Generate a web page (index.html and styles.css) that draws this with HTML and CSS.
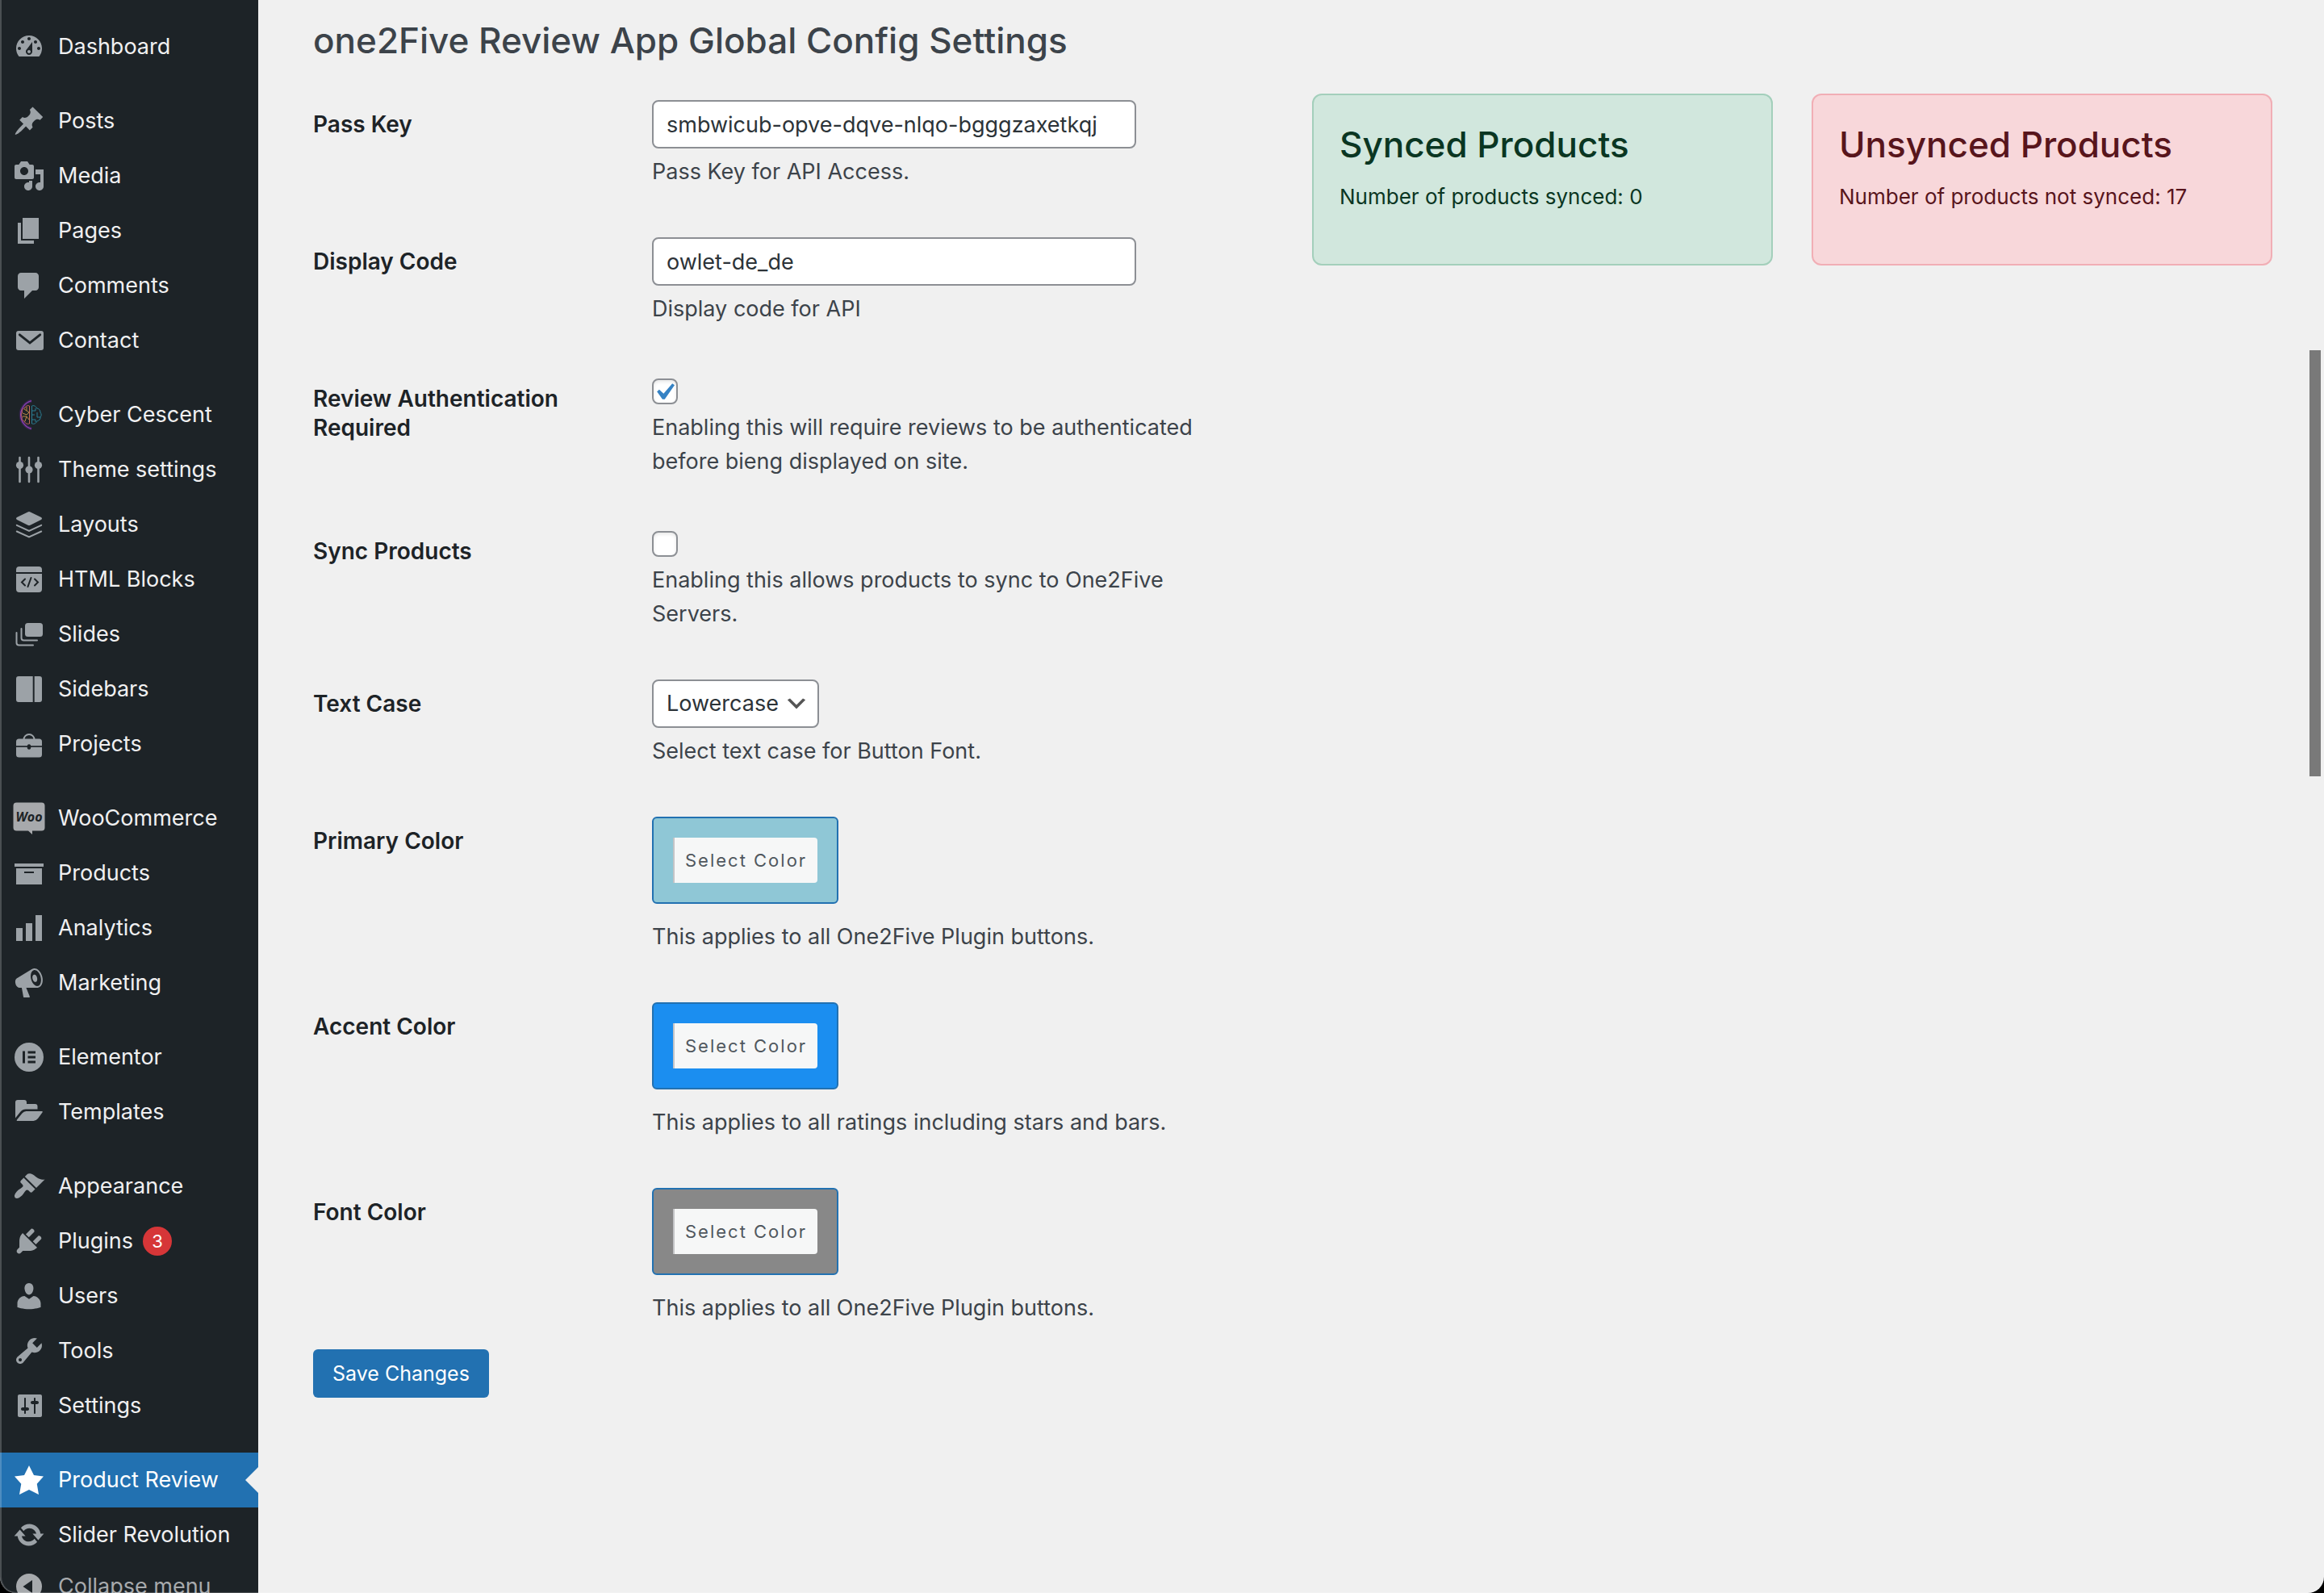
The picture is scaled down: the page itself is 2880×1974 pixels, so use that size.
FILE: index.html
```html
<!DOCTYPE html>
<html lang="en">
<head>
<meta charset="utf-8">
<title>Product Review</title>
<link rel="stylesheet" href="styles.css">
</head>
<body>
<div class="app">
  <nav class="sidebar" aria-label="Main menu">
    <ul class="menu">
      <li><a class="item" href="#"><svg class="icon" viewBox="0 0 20 20"><path d="M3.76 16h12.48c1.1-1.37 1.76-3.11 1.76-5 0-4.42-3.58-8-8-8s-8 3.58-8 8c0 1.89.66 3.63 1.76 5zM10 4c.55 0 1 .45 1 1s-.45 1-1 1-1-.45-1-1 .45-1 1-1zM6 6c.55 0 1 .45 1 1s-.45 1-1 1-1-.45-1-1 .45-1 1-1zm8 0c.55 0 1 .45 1 1s-.45 1-1 1-1-.45-1-1 .45-1 1-1zm-5.37 5.55L12 7v6c0 1.1-.9 2-2 2s-2-.9-2-2c0-.57.24-1.08.63-1.45zM4 10c.55 0 1 .45 1 1s-.45 1-1 1-1-.45-1-1 .45-1 1-1zm12 0c.55 0 1 .45 1 1s-.45 1-1 1-1-.45-1-1 .45-1 1-1zm-5 3c0-.55-.45-1-1-1s-1 .45-1 1 .45 1 1 1 1-.45 1-1z"/></svg>Dashboard</a></li>
    </ul>
    <ul class="menu">
      <li><a class="item" href="#"><svg class="icon" viewBox="0 0 20 20"><path d="M10.44 3.02l1.82-1.82 6.36 6.35-1.83 1.82c-1.05-.68-2.48-.57-3.41.36l-.75.75c-.92.93-1.04 2.35-.35 3.41l-1.83 1.82-2.41-2.41-2.8 2.79c-.42.42-3.38 2.71-3.8 2.29s1.86-3.39 2.28-3.81l2.79-2.79L4.1 9.36l1.83-1.82c1.05.69 2.48.57 3.4-.36l.75-.75c.93-.92 1.05-2.35.36-3.41z"/></svg>Posts</a></li>
      <li><a class="item" href="#"><svg class="icon" viewBox="0 0 20 20"><path d="M13 11V4c0-.55-.45-1-1-1h-1.67L9 1H5L3.67 3H2c-.55 0-1 .45-1 1v7c0 .55.45 1 1 1h10c.55 0 1-.45 1-1zM7 4.5c1.38 0 2.5 1.12 2.5 2.5S8.38 9.5 7 9.5 4.5 8.38 4.5 7 5.62 4.5 7 4.5zM14 6h5v10.5c0 1.38-1.12 2.5-2.5 2.5S14 17.88 14 16.5s1.12-2.5 2.5-2.5c.17 0 .34.02.5.05V9h-3V6zm-4 8.05V13h2v3.5c0 1.38-1.12 2.5-2.5 2.5S7 17.88 7 16.5 8.12 14 9.5 14c.17 0 .34.02.5.05z"/></svg>Media</a></li>
      <li><a class="item" href="#"><svg class="icon" viewBox="0 0 20 20"><path d="M6 15V2h10v13H6zm-1 1h8v2H3V5h2v11z"/></svg>Pages</a></li>
      <li><a class="item" href="#"><svg class="icon" viewBox="0 0 20 20"><path d="M5 2h9c1.1 0 2 .9 2 2v7c0 1.1-.9 2-2 2h-2l-5 5v-5H5c-1.1 0-2-.9-2-2V4c0-1.1.9-2 2-2z"/></svg>Comments</a></li>
      <li><a class="item" href="#"><svg class="icon" viewBox="0 0 20 20"><rect x="2" y="4" width="17" height="12" rx="1.5"/><path class="cut-line" d="M4.2 6.4l6.3 5 6.3-5" stroke-width="1.5" stroke-linecap="round"/></svg>Contact</a></li>
    </ul>
    <ul class="menu">
      <li><a class="item" href="#"><svg class="icon" viewBox="0 0 40 40" fill="none">
        <path d="M23 2.600A18 18 0 0 0 23 37.400" stroke="#6a2fa0" stroke-width="4" opacity=".3"/>
        <path d="M23 2.600A18 18 0 0 0 23 37.400" stroke="#8a3fb4" stroke-width="1.300"/>
        <path d="M20.500 9v22c-3 1-6-1-6-3-3-.5-4-3-3-5-1.800-2-1.800-4 0-6-1-3 1-5 3-5 1-3 4-4 6-3z" stroke="#c76a5a"/>
        <path d="M14 13l6 4M12 18l5 2 3-3M12 22h5l3 4M15 28l2-6M17 10v5" stroke="#b98a45"/>
        <path d="M23.500 9v22c3 1 6-1 6-3 3-.5 5-3 4.500-5 1.500-2 1.500-4 0-6 0-3-2-5-4.500-5-1-3-4-4-6-3z" stroke="#2b7f95"/>
        <path d="M24 15h4v-3M24 20h3M24 26h4v3M30 17v6h4" stroke="#2b7f95"/></svg>Cyber Cescent</a></li>
      <li><a class="item" href="#"><svg class="icon" viewBox="0 0 40 40"><path class="line" d="M8.500 5v30M20 5v30M31.500 5v30" stroke-width="2.600" stroke-linecap="round"/><circle cx="8.500" cy="14.500" r="4.600"/><circle cx="20" cy="20" r="4.600"/><circle cx="31.500" cy="14.500" r="4.600"/></svg>Theme settings</a></li>
      <li><a class="item" href="#"><svg class="icon" viewBox="0 0 40 40"><path d="M18.500 4.500q1.500-.8 3 0L35 11q2 1.500 0 3L21.500 20.800q-1.500.7-3 0L5 14q-2-1.500 0-3z"/><path class="line" d="M4.800 20.800L20 28l15.200-7.200M4.800 28.500L20 35.500l15.200-7" stroke-width="2" stroke-linecap="round"/></svg>Layouts</a></li>
      <li><a class="item" href="#"><svg class="icon" viewBox="0 0 40 40"><path d="M4 11V8q0-4 4-4h24q4 0 4 4v3zM4 13h32v19q0 4-4 4H8q-4 0-4-4z"/><path class="cut-line" d="M15 19.500l-4 4 4 4M22.500 18l-4 11M27 19.500l4 4-4 4" stroke-width="2" stroke-linecap="round"/></svg>HTML Blocks</a></li>
      <li><a class="item" href="#"><svg class="icon" viewBox="0 0 40 40"><rect x="15" y="6" width="22" height="17" rx="3.500"/><path class="line" d="M10.500 13v11.500q0 3 3 3H30M4.500 18v12.500q0 3 3 3H25" stroke-width="2" stroke-linecap="round"/></svg>Slides</a></li>
      <li><a class="item" href="#"><svg class="icon" viewBox="0 0 40 40"><path d="M24.700 4v32H7q-3 0-3-3V7q0-3 3-3zM26.700 4H33q3 0 3 3v26q0 3-3 3h-6.300z"/></svg>Sidebars</a></li>
      <li><a class="item" href="#"><svg class="icon" viewBox="0 0 40 40"><path class="line" d="M13.500 14.500a6.500 6.500 0 0 1 13 0" stroke-width="2"/><rect x="4" y="13.500" width="32" height="23" rx="3.500"/><path class="cut-line" d="M4 23h32" stroke-width="1.700"/><ellipse class="cut" cx="20" cy="23.500" rx="2.300" ry="3.300"/></svg>Projects</a></li>
    </ul>
    <ul class="menu">
      <li><a class="item" href="#"><svg class="icon woo" viewBox="0 0 40 40"><path d="M4.500.5h31q4 0 4 4v27q0 4-4 4H24V40l-5-4.500H4.500q-4 0-4-4v-27q0-4 4-4z"/><text class="cut" x="20" y="24" text-anchor="middle">Woo</text></svg>WooCommerce</a></li>
      <li><a class="item" href="#"><svg class="icon" viewBox="0 0 20 20"><path d="M19 4v2H1V4h18zM2 7h16v10H2V7zm11 3V9H7v1h6z"/></svg>Products</a></li>
      <li><a class="item" href="#"><svg class="icon" viewBox="0 0 20 20"><path d="M18 18V2h-4v16h4zm-6 0V7H8v11h4zm-6 0v-8H2v8h4z"/></svg>Analytics</a></li>
      <li><a class="item" href="#"><svg class="icon" viewBox="0 0 20 20"><path d="M18.150 5.940c.46 1.620.38 3.220-.02 4.480-.42 1.280-1.260 2.180-2.300 2.480-.16.06-.26.06-.4.06-.06.02-.12.02-.18.02-.06.02-.14.02-.22.02h-6.800l2.220 5.500c.02.14-.06.26-.14.34-.08.1-.24.16-.34.16H6.950c-.1 0-.26-.06-.34-.16-.08-.08-.16-.2-.14-.34l-1-5.500H4.250l-.02-.02c-.5.06-1.080-.18-1.540-.62s-.88-1.080-1.060-1.880c-.24-.8-.2-1.560-.02-2.200.18-.62.58-1.080 1.060-1.300l.02-.02 9-5.400c.1-.06.18-.1.24-.16.06-.04.14-.08.24-.12.16-.08.28-.12.5-.18 1.040-.3 2.240.1 3.220.98s1.840 2.240 2.260 3.860zm-2.580 5.980h-.02c.4-.1.74-.34 1.040-.7.58-.7.86-1.760.86-3.040 0-.64-.1-1.300-.28-1.980-.34-1.360-1.020-2.500-1.780-3.240s-1.680-1.100-2.460-.88c-.82.22-1.400.96-1.700 2-.32 1.040-.28 2.360.06 3.720.38 1.360 1 2.500 1.800 3.240.78.74 1.620 1.100 2.480.88zm-2.540-7.080c.22-.04.42-.02.62.04.38.16.76.48 1.020 1s.42 1.200.42 1.780c0 .3-.04.56-.12.8-.18.48-.44.84-.86.94-.34.1-.8-.06-1.140-.4s-.64-.86-.78-1.500c-.18-.62-.12-1.240.02-1.720s.48-.84.82-.94z"/></svg>Marketing</a></li>
    </ul>
    <ul class="menu">
      <li><a class="item" href="#"><svg class="icon" viewBox="0 0 40 40"><circle cx="20" cy="20" r="18"/><path class="cut" d="M12 12.500h3v15h-3zM18.500 12.500h9.500v3h-9.500zM18.500 18.500h9.500v3h-9.500zM18.500 24.500h9.500v3h-9.500z"/></svg>Elementor</a></li>
      <li><a class="item" href="#"><svg class="icon" viewBox="0 0 40 40"><path d="M3 27.500V8q0-3 3-3h8q3 0 3 3v2h10.500q3 0 3 3v3.500H16q-4 0-6.500 3zM5.500 31q-1.500 0-.5-1.500L11.500 21.500q2-2.500 5-2.500H36q1.500 0 .5 1.500L31 28q-2.500 3-5.500 3z"/></svg>Templates</a></li>
    </ul>
    <ul class="menu">
      <li><a class="item" href="#"><svg class="icon" viewBox="0 0 20 20"><path d="M14.480 11.060L7.410 3.990l1.500-1.500c.5-.56 2.300-.47 3.510.32 1.210.8 1.430 1.280 2.910 2.100 1.180.64 2.450 1.260 4.450.85zm-.71.71L6.700 4.700 4.930 6.470c-.39.39-.39 1.020 0 1.410l1.060 1.060c.39.39.39 1.030 0 1.420-.6.6-1.430 1.110-2.210 1.690-.35.26-.7.53-1.010.84C1.430 14.230.4 16.080 1.400 17.070c.99 1 2.840-.03 4.180-1.360.31-.31.58-.66.85-1.020.57-.78 1.080-1.610 1.690-2.210.39-.39 1.020-.39 1.410 0l1.060 1.060c.39.39 1.020.39 1.410 0z"/></svg>Appearance</a></li>
      <li><a class="item" href="#"><svg class="icon" viewBox="0 0 20 20"><path d="M13.110 4.360L9.870 7.600 8 5.730l3.240-3.240c.35-.34 1.050-.2 1.560.32.52.51.66 1.210.31 1.550zm-8 1.770l.91-1.120 9.010 9.010-1.190.84c-.71.71-2.630 1.160-3.820 1.160H6.140L4.900 17.260c-.59.59-1.540.59-2.120 0-.59-.58-.59-1.530 0-2.120l1.240-1.240v-3.880c0-1.130.4-3.190 1.090-3.890zm7.260 3.970l3.240-3.240c.34-.35 1.040-.21 1.550.31.52.51.66 1.210.31 1.550l-3.240 3.250z"/></svg>Plugins <span class="count">3</span></a></li>
      <li><a class="item" href="#"><svg class="icon" viewBox="0 0 20 20"><path d="M10 9.250c-2.270 0-2.730-3.440-2.730-3.440C7 4.020 7.820 2 9.970 2c2.160 0 2.980 2.020 2.710 3.810 0 0-.41 3.440-2.680 3.440zm0 2.570L12.720 10c2.390 0 4.520 2.330 4.520 4.530v2.490s-3.650 1.130-7.240 1.130c-3.650 0-7.240-1.130-7.240-1.130v-2.490c0-2.250 1.940-4.480 4.470-4.480z"/></svg>Users</a></li>
      <li><a class="item" href="#"><svg class="icon" viewBox="0 0 20 20"><path d="M16.680 9.770c-1.340 1.340-3.300 1.670-4.950.99l-5.410 6.520c-.99.99-2.590.99-3.580 0s-.99-2.590 0-3.570l6.520-5.420c-.68-1.650-.35-3.610.99-4.950 1.280-1.280 3.120-1.620 4.720-1.060l-2.890 2.890 2.820 2.820 2.860-2.870c.53 1.580.18 3.390-1.080 4.650zM3.810 16.210c.4.39 1.040.39 1.430 0 .4-.4.4-1.040 0-1.430-.39-.4-1.030-.4-1.430 0-.39.39-.39 1.030 0 1.430z"/></svg>Tools</a></li>
      <li><a class="item" href="#"><svg class="icon" viewBox="0 0 20 20"><path d="M18 16V4c0-.55-.45-1-1-1H4c-.55 0-1 .45-1 1v12c0 .55.45 1 1 1h13c.55 0 1-.45 1-1zM8 11h1c.55 0 1 .45 1 1s-.45 1-1 1H8v1.500c0 .28-.22.5-.5.5s-.5-.22-.5-.5V13H6c-.55 0-1-.45-1-1s.45-1 1-1h1V5.500c0-.28.22-.5.5-.5s.5.22.5.5V11zm5-2h-1c-.55 0-1-.45-1-1s.45-1 1-1h1V5.500c0-.28.22-.5.5-.5s.5.22.5.5V7h1c.55 0 1 .45 1 1s-.45 1-1 1h-1v5.500c0 .28-.22.5-.5.5s-.5-.22-.5-.5V9z"/></svg>Settings</a></li>
    </ul>
    <ul class="menu">
      <li><a class="item current" href="#" aria-current="page"><svg class="icon" viewBox="0 0 20 20"><path d="M10 1l3 6 6 .75-4.120 4.620L16 19l-6-3-6 3 1.130-6.630L1 7.750 7 7z"/></svg>Product Review</a></li>
      <li><a class="item" href="#"><svg class="icon" viewBox="0 0 20 20"><path d="M10.200 3.280c3.530 0 6.430 2.610 6.920 6h2.080l-3.500 4-3.500-4h2.320c-.45-1.970-2.210-3.450-4.320-3.450-1.450 0-2.730.71-3.540 1.780L4.950 5.660C6.230 4.200 8.110 3.280 10.200 3.280zm-.4 13.440c-3.520 0-6.430-2.610-6.920-6H.8l3.500-4c1.170 1.330 2.330 2.670 3.500 4H5.480c.45 1.970 2.210 3.450 4.320 3.450 1.450 0 2.730-.71 3.540-1.780l1.710 1.950c-1.280 1.460-3.150 2.380-5.250 2.380z"/></svg>Slider Revolution</a></li>
      <li><button class="item collapse" type="button"><svg class="icon" viewBox="0 0 40 40"><circle cx="20" cy="20" r="16"/><path class="cut" d="M24 12v16l-11.500-8z"/></svg>Collapse menu</button></li>
    </ul>
  </nav>

  <main class="content">
    <h1 class="title">one2Five Review App Global Config Settings</h1>
    <div class="columns">
      <form class="settings">
        <div class="field">
          <label class="name" for="pass-key">Pass Key</label>
          <div class="control">
            <input class="text" id="pass-key" type="text" value="smbwicub-opve-dqve-nlqo-bgggzaxetkqj">
            <p class="hint">Pass Key for API Access.</p>
          </div>
        </div>
        <div class="field">
          <label class="name" for="display-code">Display Code</label>
          <div class="control">
            <input class="text" id="display-code" type="text" value="owlet-de_de">
            <p class="hint">Display code for API</p>
          </div>
        </div>
        <div class="field">
          <label class="name" for="review-auth">Review Authentication Required</label>
          <div class="control">
            <input class="check" id="review-auth" type="checkbox" checked>
            <p class="hint">Enabling this will require reviews to be authenticated before bieng displayed on site.</p>
          </div>
        </div>
        <div class="field">
          <label class="name" for="sync-products">Sync Products</label>
          <div class="control">
            <input class="check" id="sync-products" type="checkbox">
            <p class="hint">Enabling this allows products to sync to One2Five Servers.</p>
          </div>
        </div>
        <div class="field">
          <label class="name" for="text-case">Text Case</label>
          <div class="control">
            <select class="select" id="text-case"><option>Lowercase</option></select>
            <p class="hint">Select text case for Button Font.</p>
          </div>
        </div>
        <div class="field">
          <label class="name" for="primary-color">Primary Color</label>
          <div class="control">
            <button class="color primary" id="primary-color" type="button"><span class="color-text">Select Color</span></button>
            <p class="hint">This applies to all One2Five Plugin buttons.</p>
          </div>
        </div>
        <div class="field">
          <label class="name" for="accent-color">Accent Color</label>
          <div class="control">
            <button class="color accent" id="accent-color" type="button"><span class="color-text">Select Color</span></button>
            <p class="hint">This applies to all ratings including stars and bars.</p>
          </div>
        </div>
        <div class="field">
          <label class="name" for="font-color">Font Color</label>
          <div class="control">
            <button class="color font" id="font-color" type="button"><span class="color-text">Select Color</span></button>
            <p class="hint">This applies to all One2Five Plugin buttons.</p>
          </div>
        </div>
        <button class="save" type="submit">Save Changes</button>
      </form>
      <div class="cards">
        <section class="card synced">
          <h2 class="card-title">Synced Products</h2>
          <p class="card-text">Number of products synced: 0</p>
        </section>
        <section class="card unsynced">
          <h2 class="card-title">Unsynced Products</h2>
          <p class="card-text">Number of products not synced: 17</p>
        </section>
      </div>
    </div>
  </main>
  <div class="scroll-thumb"></div>
</div>
</body>
</html>
```
FILE: styles.css
```css
* {
  box-sizing: border-box;
}

html {
  background: #000;
}

body {
  margin: 0;
  font-family: Inter, "Liberation Sans", sans-serif;
  font-size: 27px;
  line-height: 42px;
  color: #3c434a;
}

h1, h2, p, ul {
  margin: 0;
  padding: 0;
}

.app {
  position: relative;
  display: flex;
  height: 100vh;
  overflow: hidden;
  background: #f0f0f0;
  border-radius: 0 0 20px 20px;
}

/* Hairline highlight along the window edge */
.app::after {
  content: "";
  position: absolute;
  inset: 0;
  border-left: 2px solid rgba(255, 255, 255, .2);
  border-bottom: 1px solid rgba(255, 255, 255, .2);
  border-radius: 0 0 20px 20px;
  pointer-events: none;
}

/* Sidebar */
.sidebar {
  flex: 0 0 320px;
  display: flex;
  flex-direction: column;
  gap: 24px;
  padding-top: 24px;
  background: #1d2327;
}

.menu {
  list-style: none;
}

.item {
  position: relative;
  display: flex;
  align-items: center;
  gap: 16px;
  width: 100%;
  height: 68px;
  padding: 0 16px;
  border: 0;
  background: none;
  font: inherit;
  color: #f0f0f1;
  text-decoration: none;
  white-space: nowrap;
}

.icon {
  flex: none;
  width: 40px;
  height: 40px;
  fill: #9ca2a7;
}

.icon .line {
  fill: none;
  stroke: #9ca2a7;
}

.icon .cut {
  fill: #1d2327;
}

.icon .cut-line {
  fill: none;
  stroke: #1d2327;
}

.icon[fill="none"] {
  fill: none;
}

.woo {
  fill: #a7a9ac;
}

.woo text {
  font: italic 700 16px "Open Sans", sans-serif;
}

.current {
  background: #2271b1;
  color: #fff;
}

.current .icon {
  fill: #fff;
}

.current::after {
  content: "";
  position: absolute;
  top: 50%;
  right: 0;
  margin-top: -16px;
  border: 16px solid transparent;
  border-left-width: 0;
  border-right-color: #f0f0f0;
}

.collapse {
  height: 60px;
  color: #a7aaad;
}

.collapse .icon {
  fill: #a7aaad;
}

.count {
  width: 36px;
  height: 36px;
  margin-left: -4px;
  border-radius: 18px;
  background: #d63638;
  color: #fff;
  font-size: 22px;
  line-height: 36px;
  text-align: center;
}

/* Content */
.content {
  flex: 1;
  min-width: 0;
  padding: 20px 64px 0 68px;
}

.title {
  margin-bottom: 14px;
  font-size: 44px;
  font-weight: 500;
  line-height: 60px;
}

.columns {
  display: grid;
  grid-template-columns: 1fr 1fr;
  gap: 48px;
  align-items: start;
}

.field {
  display: grid;
  grid-template-columns: 400px 1fr;
  gap: 20px;
}

.name {
  padding: 42px 20px 0 0;
  font-size: 28px;
  font-weight: 600;
  line-height: 36px;
  color: #1d2327;
}

.control {
  padding: 30px 40px 30px 0;
}

.hint {
  margin-top: 8px;
}

.text,
.select {
  display: block;
  height: 60px;
  padding: 0 16px;
  border: 2px solid #8c8f94;
  border-radius: 8px;
  background-color: #fff;
  font: inherit;
  color: #2c3338;
}

.text {
  width: 600px;
}

.select {
  appearance: none;
  padding-right: 48px;
  background-image: url("data:image/svg+xml,%3Csvg xmlns='http://www.w3.org/2000/svg' viewBox='0 0 20 20'%3E%3Cpath d='M5 6l5 5 5-5 2 1-7 7-7-7 2-1z' fill='%23555'/%3E%3C/svg%3E");
  background-repeat: no-repeat;
  background-position: right 10px center;
  background-size: 32px 32px;
}

.check {
  appearance: none;
  display: block;
  width: 32px;
  height: 32px;
  margin: 5px 0 0;
  border: 2px solid #8c8f94;
  border-radius: 8px;
  background-color: #fff;
  box-shadow: inset 0 2px 4px rgba(0, 0, 0, .1);
}

.check:checked {
  background-image: url("data:image/svg+xml,%3Csvg xmlns='http://www.w3.org/2000/svg' viewBox='0 0 20 20'%3E%3Cpath d='M14.83 4.890l1.340.94-5.810 8.380H9.020L5.780 9.670l1.340-1.250 2.570 2.400z' fill='%233582c4'/%3E%3C/svg%3E");
  background-repeat: no-repeat;
  background-position: -8px -6px;
  background-size: 42px 42px;
}

.color {
  display: block;
  padding: 24px;
  border: 2px solid #2271b1;
  border-radius: 6px;
}

.color + .hint {
  margin-top: 20px;
}

.primary {
  background: #8fc7d6;
}

.accent {
  background: #1b8ef0;
}

.font {
  background: #888;
}

.color-text {
  display: block;
  padding: 0 13px;
  border-left: 2px solid #c3c4c7;
  border-radius: 0 4px 4px 0;
  background: #f6f7f7;
  font: 22px/56px Inter, "Liberation Sans", sans-serif;
  letter-spacing: 2px;
  color: #50575e;
}

.save {
  display: block;
  height: 60px;
  padding: 0 24px;
  border: 0;
  border-radius: 6px;
  background: #2271b1;
  font: 25px/60px Inter, "Liberation Sans", sans-serif;
  color: #fff;
}

/* Status cards */
.cards {
  display: grid;
  grid-template-columns: 1fr 1fr;
  gap: 48px;
  padding-top: 22px;
}

.card {
  padding: 32px 32px 64px;
  border: 2px solid;
  border-radius: 12px;
}

.card-title {
  margin-bottom: 16px;
  font-size: 44px;
  font-weight: 500;
  line-height: 58px;
}

.card-text {
  font-size: 26px;
  line-height: 39px;
}

.synced {
  background: #d1e7dd;
  border-color: #a3cfbb;
  color: #0a3622;
}

.unsynced {
  background: #f8d7da;
  border-color: #f1aeb5;
  color: #58151c;
}

.scroll-thumb {
  position: absolute;
  top: 22%;
  right: 4px;
  width: 14px;
  height: 528px;
  background: #797979;
}
```
